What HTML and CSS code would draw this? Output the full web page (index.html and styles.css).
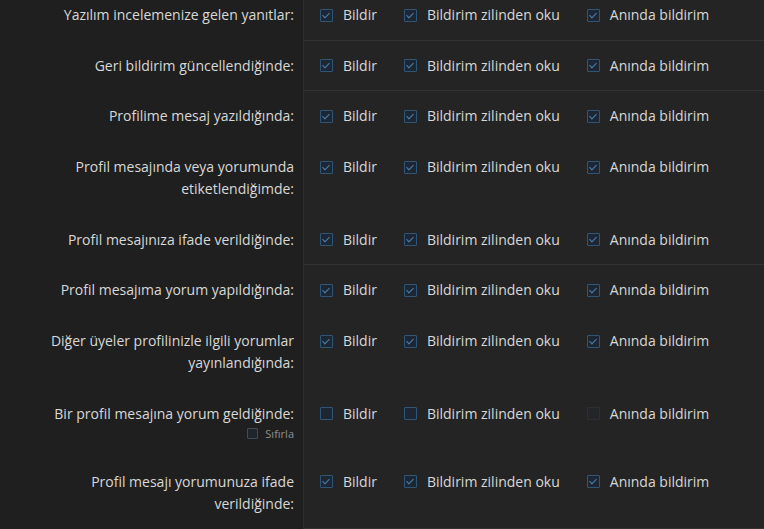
FILE: index.html
```html
<!DOCTYPE html>
<html lang="tr">
<head>
<meta charset="utf-8">
<link rel="stylesheet" href="styles.css">
</head>
<body>
<div class="list">
  <div class="row sep">
    <div class="label"><span>Yazılım incelemenize gelen yanıtlar:</span></div>
    <div class="opts">
      <label class="opt"><span class="cb on"></span>Bildir</label>
      <label class="opt"><span class="cb on"></span>Bildirim zilinden oku</label>
      <label class="opt"><span class="cb on"></span>Anında bildirim</label>
    </div>
  </div>
  <div class="row sep">
    <div class="label"><span>Geri bildirim güncellendiğinde:</span></div>
    <div class="opts">
      <label class="opt"><span class="cb on"></span>Bildir</label>
      <label class="opt"><span class="cb on"></span>Bildirim zilinden oku</label>
      <label class="opt"><span class="cb on"></span>Anında bildirim</label>
    </div>
  </div>
  <div class="row">
    <div class="label"><span>Profilime mesaj yazıldığında:</span></div>
    <div class="opts">
      <label class="opt"><span class="cb on"></span>Bildir</label>
      <label class="opt"><span class="cb on"></span>Bildirim zilinden oku</label>
      <label class="opt"><span class="cb on"></span>Anında bildirim</label>
    </div>
  </div>
  <div class="row">
    <div class="label"><span>Profil mesajında veya yorumunda etiketlendiğimde:</span></div>
    <div class="opts">
      <label class="opt"><span class="cb on"></span>Bildir</label>
      <label class="opt"><span class="cb on"></span>Bildirim zilinden oku</label>
      <label class="opt"><span class="cb on"></span>Anında bildirim</label>
    </div>
  </div>
  <div class="row sep">
    <div class="label"><span>Profil mesajınıza ifade verildiğinde:</span></div>
    <div class="opts">
      <label class="opt"><span class="cb on"></span>Bildir</label>
      <label class="opt"><span class="cb on"></span>Bildirim zilinden oku</label>
      <label class="opt"><span class="cb on"></span>Anında bildirim</label>
    </div>
  </div>
  <div class="row">
    <div class="label"><span>Profil mesajıma yorum yapıldığında:</span></div>
    <div class="opts">
      <label class="opt"><span class="cb on"></span>Bildir</label>
      <label class="opt"><span class="cb on"></span>Bildirim zilinden oku</label>
      <label class="opt"><span class="cb on"></span>Anında bildirim</label>
    </div>
  </div>
  <div class="row">
    <div class="label"><span>Diğer üyeler profilinizle ilgili yorumlar yayınlandığında:</span></div>
    <div class="opts">
      <label class="opt"><span class="cb on"></span>Bildir</label>
      <label class="opt"><span class="cb on"></span>Bildirim zilinden oku</label>
      <label class="opt"><span class="cb on"></span>Anında bildirim</label>
    </div>
  </div>
  <div class="row">
    <div class="label">
      <span>Bir profil mesajına yorum geldiğinde:</span>
      <label class="reset"><span class="cb small"></span>Sıfırla</label>
    </div>
    <div class="opts">
      <label class="opt"><span class="cb"></span>Bildir</label>
      <label class="opt"><span class="cb"></span>Bildirim zilinden oku</label>
      <label class="opt"><span class="cb off"></span>Anında bildirim</label>
    </div>
  </div>
  <div class="row sep">
    <div class="label"><span>Profil mesajı yorumunuza ifade verildiğinde:</span></div>
    <div class="opts">
      <label class="opt"><span class="cb on"></span>Bildir</label>
      <label class="opt"><span class="cb on"></span>Bildirim zilinden oku</label>
      <label class="opt"><span class="cb on"></span>Anında bildirim</label>
    </div>
  </div>
</div>
</body>
</html>
```

FILE: styles.css
```css
html, body {
  margin: 0;
  padding: 0;
  background: #242424;
  height: 100%;
  overflow: hidden;
}
body {
  font-family: "Open Sans", "Noto Sans", sans-serif;
  font-size: 14px;
  color: #d8d8d8;
}
.list {
  margin-top: -10px;
  background: linear-gradient(to right, #1f1f1f 0, #1f1f1f 303px, #2e2e2e 303px, #2e2e2e 304px, #242424 304px);
  min-height: 600px;
}
.row {
  display: flex;
}
.label {
  width: 303px;
  flex: none;
  box-sizing: border-box;
  padding: 14px 9px 14.7px 20px;
  text-align: right;
  line-height: 22px;
  display: flex;
  flex-direction: column;
  align-items: flex-end;
}
.label > span {
  display: block;
}
.opts {
  flex: 1;
  margin-left: 1px;
  padding: 14px 0 13.7px 16px;
  display: flex;
  gap: 27px;
  align-items: flex-start;
  line-height: 22px;
  border-bottom: 1px solid transparent;
}
.row.sep .opts {
  border-bottom-color: #323232;
}
.opt {
  display: flex;
  align-items: center;
  gap: 10px;
  white-space: nowrap;
}
.cb {
  width: 13px;
  height: 13px;
  box-sizing: border-box;
  border: 1px solid #2f5677;
  background: #1d2733;
  border-radius: 1px;
  flex: none;
  position: relative;
}
.cb.on::after {
  content: "";
  position: absolute;
  left: 3px;
  top: 1px;
  width: 3px;
  height: 6px;
  border-right: 1.5px solid #4a80ad;
  border-bottom: 1.5px solid #4a80ad;
  transform: rotate(45deg);
}
.cb.off {
  border-color: #2c2f33;
  background: #232528;
}
.reset {
  display: flex;
  align-items: center;
  gap: 7px;
  font-size: 11px;
  line-height: 16px;
  color: #8f8f8f;
  margin-top: 1px;
}
.cb.small {
  width: 11px;
  height: 11px;
  border-color: #3f4b57;
  background: #20252b;
}
```
